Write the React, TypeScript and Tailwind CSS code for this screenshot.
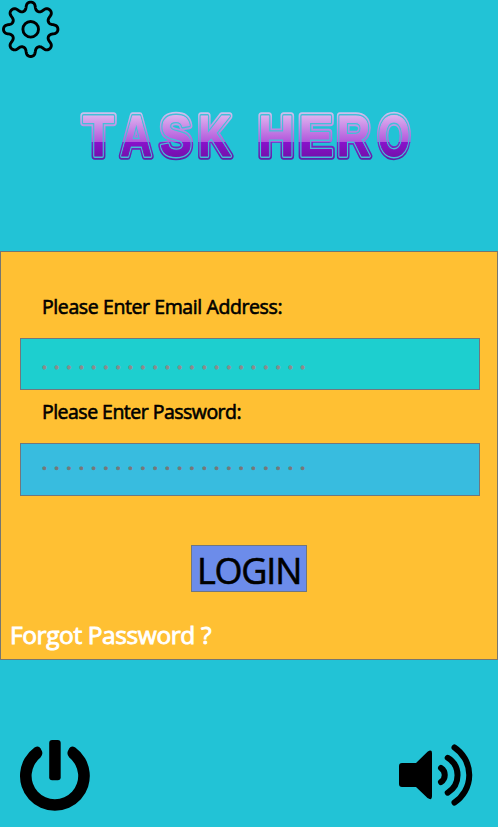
import React from "react";

const letters = [
  { ch: "T", x: 82.5, w: 31 },
  { ch: "A", x: 120, w: 31.5 },
  { ch: "S", x: 159.5, w: 32 },
  { ch: "K", x: 197.5, w: 33 },
  { ch: "H", x: 257.8, w: 36 },
  { ch: "E", x: 298, w: 35 },
  { ch: "R", x: 336.3, w: 33.5 },
  { ch: "O", x: 377.5, w: 32 },
];

const layers = [
  { stroke: "url(#logoEdge)", width: 7.5, fill: "none" },
  { stroke: "#43bfd7", width: 3.8, fill: "none" },
  { stroke: "url(#logoFill)", width: 1.1, fill: "url(#logoFill)" },
];

function Logo() {
  return (
    <svg viewBox="70 100 355 70" className="mx-auto mt-[40px] block h-[70px] w-[355px] -translate-x-[1.5px]">
      <defs>
        <linearGradient id="logoFill" gradientUnits="userSpaceOnUse" x1="0" y1="113" x2="0" y2="160">
          <stop offset="0" stopColor="#e2baf0" />
          <stop offset="0.61" stopColor="#b257dc" />
          <stop offset="0.61" stopColor="#8a11cc" />
          <stop offset="1" stopColor="#7011a6" />
        </linearGradient>
        <linearGradient id="logoEdge" gradientUnits="userSpaceOnUse" x1="0" y1="113" x2="0" y2="160">
          <stop offset="0" stopColor="#cdbfee" />
          <stop offset="0.61" stopColor="#ad62dc" />
          <stop offset="0.61" stopColor="#7e28c8" />
          <stop offset="1" stopColor="#5b20a6" />
        </linearGradient>
      </defs>
      {layers.map((l, i) => (
        <g
          key={i}
          className="font-['Liberation_Sans',sans-serif] text-[58px] font-bold"
          stroke={l.stroke}
          strokeWidth={l.width}
          fill={l.fill}
          strokeLinejoin="round"
        >
          {letters.map((c) => (
            <text key={c.ch} x={c.x} y="156.3" textLength={c.w} lengthAdjust="spacingAndGlyphs">
              {c.ch}
            </text>
          ))}
        </g>
      ))}
    </svg>
  );
}

function Gear() {
  const pts: string[] = [];
  for (let i = 0; i <= 320; i++) {
    const a = (i / 320) * Math.PI * 2;
    const r = 23.2 + 4 * Math.cos(8 * a);
    const t = a + 0.03 * Math.sin(16 * a);
    pts.push(`${(30.7 + r * Math.sin(t)).toFixed(2)},${(29.3 - r * Math.cos(t)).toFixed(2)}`);
  }
  return (
    <svg viewBox="0 0 60 60" className="block size-[60px]" fill="none" stroke="#000" strokeWidth="2.9">
      <polygon points={pts.join(" ")} strokeLinejoin="round" />
      <circle cx="30.7" cy="29.3" r="7.8" />
    </svg>
  );
}

function Power() {
  return (
    <svg viewBox="0 0 72 72" className="size-[72px]">
      <path d="M14.500 7.600Q18.500 5.200 20.500 8.300L22 11.200Q23.200 14.500 20.500 17.600A23.300 23.300 0 1 0 49.300 17.600Q46.600 14.500 47.800 11.200L49.300 8.300Q51.300 5.200 55.300 7.600A34.900 34.900 0 1 1 14.500 7.600Z" />
      <rect x="29.2" y="0" width="11.5" height="40.3" rx="3" />
    </svg>
  );
}

function Volume() {
  return (
    <svg viewBox="0 0 76 64" className="h-[64px] w-[76px]">
      <path d="M3 20H17L28.500 8.700Q33 6 33 10V53Q33 58 28.500 55L17 44H3Q0 44 0 41V23Q0 20 3 20Z" />
      <g fill="none" stroke="#000" strokeWidth="6" strokeLinecap="round">
        <path d="M42 25A8.400 8.400 0 0 1 42 39" />
        <path d="M48.700 14.800A20.400 20.400 0 0 1 48.700 49.700" />
        <path d="M55.500 4.500A33 33 0 0 1 55.500 59.500" />
      </g>
    </svg>
  );
}

export default function App() {
  return (
    <div className="flex h-[827px] w-[498px] flex-col overflow-hidden bg-[#22c3d6] font-['Open_Sans','Noto_Sans',sans-serif] text-black">
      <header className="h-[251px]">
        <Gear />
        <Logo />
      </header>
      <main className="h-[409px] border border-[#76766f] bg-[#ffc033] pl-[19px] pr-[17px]">
        <p className="ml-[22px] pt-[41px] whitespace-nowrap text-[19.5px] leading-[28px] tracking-[-0.4px] [-webkit-text-stroke:0.6px_#000]">
          Please Enter Email Address:
        </p>
        <div className="mt-[17px] h-[52px] overflow-hidden border border-[#71777d] bg-[#1dcfcf] pl-[20px] text-[26px] leading-[41px] tracking-[5.47px] whitespace-nowrap text-[#8b8b8b] [-webkit-text-stroke:0.9px_#8b8b8b]">
          ......................
        </div>
        <p className="ml-[22px] mt-[8px] whitespace-nowrap text-[19.5px] leading-[28px] tracking-[-0.52px] [-webkit-text-stroke:0.6px_#000]">
          Please Enter Password:
        </p>
        <div className="mt-[17px] h-[53px] overflow-hidden border border-[#71777d] bg-[#38bcdf] pl-[20px] text-[26px] leading-[33px] tracking-[5.47px] whitespace-nowrap text-[#777777] [-webkit-text-stroke:0.7px_#777777]">
          ......................
        </div>
        <button className="ml-[171px] mt-[49px] flex h-[47px] w-[116px] items-center justify-center border border-[#71777d] bg-[#6c8cea] text-[36px] leading-none tracking-[-1.2px] [-webkit-text-stroke:0.6px_#000]">
          <span className="translate-y-[2px]">LOGIN</span>
        </button>
        <p className="-ml-[10px] mt-[26px] whitespace-nowrap text-[24.5px] leading-[34px] tracking-[-0.4px] text-white [-webkit-text-stroke:0.9px_#fff]">
          Forgot Password ?
        </p>
      </main>
      <footer className="mt-[80px] flex justify-between pl-[20px] pr-[23px]">
        <Power />
        <span className="mt-[3px]"><Volume /></span>
      </footer>
    </div>
  );
}
